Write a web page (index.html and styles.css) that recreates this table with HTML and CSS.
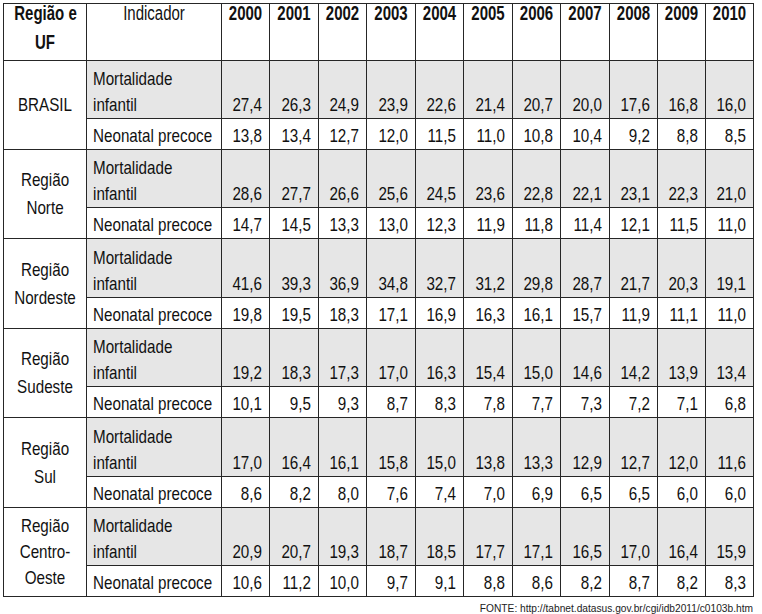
FILE: index.html
```html
<!DOCTYPE html>
<html lang="pt-BR">
<head>
<meta charset="utf-8">
<title>Mortalidade infantil e neonatal precoce</title>
<link rel="stylesheet" href="styles.css">
</head>
<body>
<main class="page">
<table class="grid">
<colgroup>
<col class="c-uf"><col class="c-ind">
<col class="c-y48"><col class="c-y49"><col class="c-y48"><col class="c-y49"><col class="c-y48"><col class="c-y49"><col class="c-y48"><col class="c-y49"><col class="c-y48"><col class="c-y48"><col class="c-y48">
</colgroup>
<thead>
<tr class="head">
<th class="hb"><span class="t">Região e<br>UF</span></th>
<th class="hr"><span class="t">Indicador</span></th>
<th class="hb"><span class="t">2000</span></th><th class="hb"><span class="t">2001</span></th><th class="hb"><span class="t">2002</span></th><th class="hb"><span class="t">2003</span></th><th class="hb"><span class="t">2004</span></th><th class="hb"><span class="t">2005</span></th><th class="hb"><span class="t">2006</span></th><th class="hb"><span class="t">2007</span></th><th class="hb"><span class="t">2008</span></th><th class="hb"><span class="t">2009</span></th><th class="hb"><span class="t">2010</span></th>
</tr>
</thead>
<tbody>
<tr class="mort">
<th rowspan="2" class="reg"><span class="t">BRASIL</span></th>
<td class="ind"><span class="t">Mortalidade<br>infantil</span></td>
<td class="n"><span class="t">27,4</span></td><td class="n"><span class="t">26,3</span></td><td class="n"><span class="t">24,9</span></td><td class="n"><span class="t">23,9</span></td><td class="n"><span class="t">22,6</span></td><td class="n"><span class="t">21,4</span></td><td class="n"><span class="t">20,7</span></td><td class="n"><span class="t">20,0</span></td><td class="n"><span class="t">17,6</span></td><td class="n"><span class="t">16,8</span></td><td class="n"><span class="t">16,0</span></td>
</tr>
<tr class="neo">
<td class="ind"><span class="t">Neonatal precoce</span></td>
<td class="n"><span class="t">13,8</span></td><td class="n"><span class="t">13,4</span></td><td class="n"><span class="t">12,7</span></td><td class="n"><span class="t">12,0</span></td><td class="n"><span class="t">11,5</span></td><td class="n"><span class="t">11,0</span></td><td class="n"><span class="t">10,8</span></td><td class="n"><span class="t">10,4</span></td><td class="n"><span class="t">9,2</span></td><td class="n"><span class="t">8,8</span></td><td class="n"><span class="t">8,5</span></td>
</tr>
<tr class="mort">
<th rowspan="2" class="reg"><span class="t">Região<br>Norte</span></th>
<td class="ind"><span class="t">Mortalidade<br>infantil</span></td>
<td class="n"><span class="t">28,6</span></td><td class="n"><span class="t">27,7</span></td><td class="n"><span class="t">26,6</span></td><td class="n"><span class="t">25,6</span></td><td class="n"><span class="t">24,5</span></td><td class="n"><span class="t">23,6</span></td><td class="n"><span class="t">22,8</span></td><td class="n"><span class="t">22,1</span></td><td class="n"><span class="t">23,1</span></td><td class="n"><span class="t">22,3</span></td><td class="n"><span class="t">21,0</span></td>
</tr>
<tr class="neo">
<td class="ind"><span class="t">Neonatal precoce</span></td>
<td class="n"><span class="t">14,7</span></td><td class="n"><span class="t">14,5</span></td><td class="n"><span class="t">13,3</span></td><td class="n"><span class="t">13,0</span></td><td class="n"><span class="t">12,3</span></td><td class="n"><span class="t">11,9</span></td><td class="n"><span class="t">11,8</span></td><td class="n"><span class="t">11,4</span></td><td class="n"><span class="t">12,1</span></td><td class="n"><span class="t">11,5</span></td><td class="n"><span class="t">11,0</span></td>
</tr>
<tr class="mort tall">
<th rowspan="2" class="reg"><span class="t">Região<br>Nordeste</span></th>
<td class="ind"><span class="t">Mortalidade<br>infantil</span></td>
<td class="n"><span class="t">41,6</span></td><td class="n"><span class="t">39,3</span></td><td class="n"><span class="t">36,9</span></td><td class="n"><span class="t">34,8</span></td><td class="n"><span class="t">32,7</span></td><td class="n"><span class="t">31,2</span></td><td class="n"><span class="t">29,8</span></td><td class="n"><span class="t">28,7</span></td><td class="n"><span class="t">21,7</span></td><td class="n"><span class="t">20,3</span></td><td class="n"><span class="t">19,1</span></td>
</tr>
<tr class="neo">
<td class="ind"><span class="t">Neonatal precoce</span></td>
<td class="n"><span class="t">19,8</span></td><td class="n"><span class="t">19,5</span></td><td class="n"><span class="t">18,3</span></td><td class="n"><span class="t">17,1</span></td><td class="n"><span class="t">16,9</span></td><td class="n"><span class="t">16,3</span></td><td class="n"><span class="t">16,1</span></td><td class="n"><span class="t">15,7</span></td><td class="n"><span class="t">11,9</span></td><td class="n"><span class="t">11,1</span></td><td class="n"><span class="t">11,0</span></td>
</tr>
<tr class="mort">
<th rowspan="2" class="reg"><span class="t">Região<br>Sudeste</span></th>
<td class="ind"><span class="t">Mortalidade<br>infantil</span></td>
<td class="n"><span class="t">19,2</span></td><td class="n"><span class="t">18,3</span></td><td class="n"><span class="t">17,3</span></td><td class="n"><span class="t">17,0</span></td><td class="n"><span class="t">16,3</span></td><td class="n"><span class="t">15,4</span></td><td class="n"><span class="t">15,0</span></td><td class="n"><span class="t">14,6</span></td><td class="n"><span class="t">14,2</span></td><td class="n"><span class="t">13,9</span></td><td class="n"><span class="t">13,4</span></td>
</tr>
<tr class="neo">
<td class="ind"><span class="t">Neonatal precoce</span></td>
<td class="n"><span class="t">10,1</span></td><td class="n"><span class="t">9,5</span></td><td class="n"><span class="t">9,3</span></td><td class="n"><span class="t">8,7</span></td><td class="n"><span class="t">8,3</span></td><td class="n"><span class="t">7,8</span></td><td class="n"><span class="t">7,7</span></td><td class="n"><span class="t">7,3</span></td><td class="n"><span class="t">7,2</span></td><td class="n"><span class="t">7,1</span></td><td class="n"><span class="t">6,8</span></td>
</tr>
<tr class="mort tall">
<th rowspan="2" class="reg"><span class="t">Região<br>Sul</span></th>
<td class="ind"><span class="t">Mortalidade<br>infantil</span></td>
<td class="n"><span class="t">17,0</span></td><td class="n"><span class="t">16,4</span></td><td class="n"><span class="t">16,1</span></td><td class="n"><span class="t">15,8</span></td><td class="n"><span class="t">15,0</span></td><td class="n"><span class="t">13,8</span></td><td class="n"><span class="t">13,3</span></td><td class="n"><span class="t">12,9</span></td><td class="n"><span class="t">12,7</span></td><td class="n"><span class="t">12,0</span></td><td class="n"><span class="t">11,6</span></td>
</tr>
<tr class="neo">
<td class="ind"><span class="t">Neonatal precoce</span></td>
<td class="n"><span class="t">8,6</span></td><td class="n"><span class="t">8,2</span></td><td class="n"><span class="t">8,0</span></td><td class="n"><span class="t">7,6</span></td><td class="n"><span class="t">7,4</span></td><td class="n"><span class="t">7,0</span></td><td class="n"><span class="t">6,9</span></td><td class="n"><span class="t">6,5</span></td><td class="n"><span class="t">6,5</span></td><td class="n"><span class="t">6,0</span></td><td class="n"><span class="t">6,0</span></td>
</tr>
<tr class="mort">
<th rowspan="2" class="reg reg3"><span class="t">Região<br>Centro-<br>Oeste</span></th>
<td class="ind"><span class="t">Mortalidade<br>infantil</span></td>
<td class="n"><span class="t">20,9</span></td><td class="n"><span class="t">20,7</span></td><td class="n"><span class="t">19,3</span></td><td class="n"><span class="t">18,7</span></td><td class="n"><span class="t">18,5</span></td><td class="n"><span class="t">17,7</span></td><td class="n"><span class="t">17,1</span></td><td class="n"><span class="t">16,5</span></td><td class="n"><span class="t">17,0</span></td><td class="n"><span class="t">16,4</span></td><td class="n"><span class="t">15,9</span></td>
</tr>
<tr class="neo">
<td class="ind"><span class="t">Neonatal precoce</span></td>
<td class="n"><span class="t">10,6</span></td><td class="n"><span class="t">11,2</span></td><td class="n"><span class="t">10,0</span></td><td class="n"><span class="t">9,7</span></td><td class="n"><span class="t">9,1</span></td><td class="n"><span class="t">8,8</span></td><td class="n"><span class="t">8,6</span></td><td class="n"><span class="t">8,2</span></td><td class="n"><span class="t">8,7</span></td><td class="n"><span class="t">8,2</span></td><td class="n"><span class="t">8,3</span></td>
</tr>
</tbody>
</table>
<p class="source">FONTE: http://tabnet.datasus.gov.br/cgi/idb2011/c0103b.htm</p>
</main>
</body>
</html>
```

FILE: styles.css
```css
html, body {
  margin: 0;
  padding: 0;
  background: #ffffff;
  overflow: hidden;
}

.page {
  padding: 3px 0 0 3px;
  font-family: "Liberation Sans", Arial, sans-serif;
  color: #111111;
}

.grid {
  border-collapse: collapse;
  table-layout: fixed;
  width: 751px;
}

.c-uf { width: 83px; }
.c-ind { width: 135px; }
.c-y48 { width: 48px; }
.c-y49 { width: 49px; }

.grid th,
.grid td {
  border: 1px solid #262626;
  padding: 0;
  font-size: 19px;
  line-height: 26px;
  font-weight: normal;
  white-space: nowrap;
}

.t {
  display: block;
  transform: scaleX(0.8);
}

/* header */
.head { height: 57px; }
.head th {
  vertical-align: top;
  text-align: center;
  font-size: 20px;
  line-height: 29px;
}
.head th .t {
  margin-top: -5px;
  transform: scaleX(0.75);
  transform-origin: 50% 50%;
}
.head .hb { font-weight: bold; }
.head .hr { font-weight: normal; }

/* body rows */
.mort { height: 58px; }
.mort.tall { height: 59px; }
.neo { height: 31px; }

.mort td { background: #e6e6e6; }

.grid .reg {
  background: #ffffff;
  text-align: center;
  vertical-align: middle;
  line-height: 28px;
}
.grid .reg3 { line-height: 26px; }
.reg .t { transform-origin: 50% 50%; }

.ind {
  text-align: left;
  vertical-align: bottom;
  padding-left: 6px !important;
}
.ind .t { transform-origin: 0 50%; }

.n {
  text-align: right;
  vertical-align: bottom;
  padding-right: 7px !important;
}
.n .t { transform-origin: 100% 50%; }

.source {
  margin: 7px 0 0 0;
  padding-right: 9px;
  text-align: right;
  font-size: 10.2px;
  line-height: 10px;
  color: #222222;
}
```
